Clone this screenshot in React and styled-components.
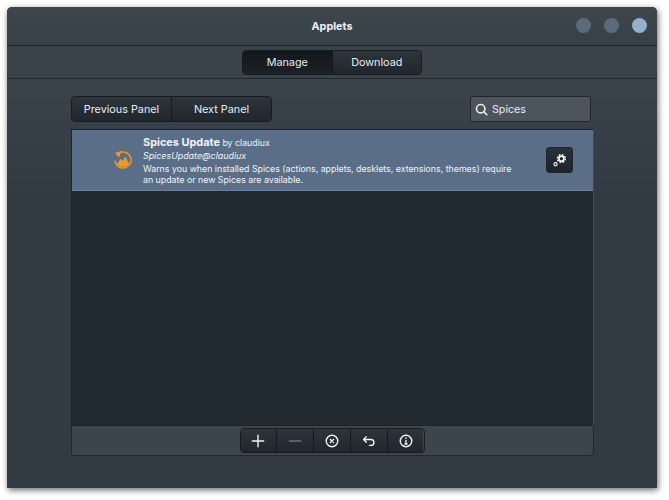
import React from 'react';
import styled, { createGlobalStyle } from 'styled-components';

const GlobalStyle = createGlobalStyle`
  html, body {
    margin: 0;
    background: #fff;
  }

  body {
    font-family: 'Inter', 'Liberation Sans', sans-serif;
    -webkit-font-smoothing: antialiased;
  }
`;

const Page = styled.div`
  box-sizing: border-box;
  height: 500px;
  overflow: hidden;
  padding: 7px 12px 11px 7px;
  width: 669px;
`;

const Window = styled.div`
  background: #323b43;
  border-radius: 5px 5px 0 0;
  box-shadow: 1px 2px 6px rgba(0, 0, 0, 0.6);
  display: flex;
  flex-direction: column;
  height: 481px;
  overflow: hidden;
  width: 650px;
`;

const TitleBar = styled.header`
  align-items: center;
  background: linear-gradient(#3e464e, #373f47);
  border-bottom: 1px solid #20272d;
  box-sizing: border-box;
  display: flex;
  flex: none;
  height: 39px;
  justify-content: center;
  padding-top: 1px;
  position: relative;
`;

const Title = styled.h1`
  color: #eef1f3;
  font-size: 10.8px;
  font-weight: 700;
  margin: 0;
`;

const WindowControls = styled.div`
  display: flex;
  gap: 13px;
  position: absolute;
  right: 10px;
  top: 11px;
`;

const WindowDot = styled.span`
  background: ${(p) => (p.$active ? '#93b1cd' : '#5b6b7e')};
  border-radius: 50%;
  height: 15px;
  width: 15px;
`;

const TabBar = styled.nav`
  background: #3a424a;
  border-bottom: 1px solid #20272d;
  box-sizing: border-box;
  display: flex;
  flex: none;
  height: 33px;
  justify-content: center;
  padding-top: 4px;
`;

const Group = styled.div`
  border: 1px solid #171c21;
  border-radius: 4px;
  box-sizing: border-box;
  display: flex;
  overflow: hidden;
`;

const TabGroup = styled(Group)`
  height: 25px;
  width: 180px;
`;

const Segment = styled.button`
  align-items: center;
  background: ${(p) =>
    p.$active
      ? 'linear-gradient(#12171b, #1b2126)'
      : 'linear-gradient(#2d353c, #1f262c)'};
  border: 0;
  border-left: 1px solid #14191d;
  color: #e8ebee;
  display: flex;
  flex: 1;
  font-family: inherit;
  font-size: 10.8px;
  justify-content: center;
  padding: 0;

  &:first-child {
    border-left: 0;
  }
`;

const Content = styled.main`
  background: linear-gradient(#3a424a, #323b43 120px);
  display: flex;
  flex: 1;
  flex-direction: column;
  padding: 17px 63px 0 64px;
`;

const ControlRow = styled.div`
  display: flex;
  justify-content: space-between;
  padding-right: 3px;
`;

const PanelGroup = styled(Group)`
  height: 26px;
  width: 201px;
`;

const Search = styled.label`
  align-items: center;
  background: #4c555d;
  border: 1px solid #20262c;
  border-radius: 3px;
  box-sizing: border-box;
  color: #e8ebee;
  display: flex;
  font-size: 10.7px;
  gap: 4px;
  height: 26px;
  padding-left: 4px;
  width: 121px;
`;

const AppletList = styled.section`
  background: #212a31;
  border: 1px solid #1c2329;
  border-right-color: #3f4a54;
  box-sizing: border-box;
  height: 297px;
  margin-top: 7px;
`;

const AppletRow = styled.article`
  align-items: center;
  background: #5a6f87;
  border-bottom: 1px solid #6a7f98;
  box-sizing: border-box;
  color: #f0f3f6;
  display: flex;
  height: 61px;
  padding: 0 20px 0 41px;
`;

const AppletIcon = styled.svg`
  flex: none;
  height: 20px;
  width: 20px;
`;

const AppletText = styled.div`
  flex: 1;
  font-size: 8.8px;
  line-height: 11px;
  margin-left: 10px;
`;

const AppletName = styled.div`
  line-height: 13px;

  strong {
    font-size: 10.9px;
    font-weight: 700;
  }
`;

const AppletUuid = styled.div`
  font-size: 8.9px;
  font-style: italic;
  line-height: 14px;
`;

const ConfigureButton = styled.button`
  align-items: center;
  background: linear-gradient(#2b3137, #1d2227);
  border: 1px solid #20262c;
  border-radius: 3px;
  display: flex;
  height: 26px;
  justify-content: center;
  padding: 0;
  width: 27px;
`;

const Toolbar = styled.footer`
  background: #3c444c;
  border: 1px solid #20272d;
  border-radius: 0 0 4px 4px;
  border-top: 0;
  box-sizing: border-box;
  display: flex;
  height: 30px;
  justify-content: center;
  padding-top: 2px;
`;

const ToolGroup = styled(Group)`
  height: 25px;
  margin-right: 1px;
  width: 185px;
`;

const ToolButton = styled(Segment)`
  color: ${(p) => (p.$muted ? '#69727a' : '#f2f4f6')};
`;

const GlyphIcon = ({ children, size = 14, weight = 1.6 }) => (
  <svg
    width={size}
    height={size}
    viewBox="0 0 16 16"
    fill="none"
    stroke="currentColor"
    strokeWidth={weight}
    strokeLinecap="round"
    strokeLinejoin="round"
  >
    {children}
  </svg>
);

const tools = [
  { name: 'add', icon: <path d="M8 1.5v13M1.5 8h13" /> },
  { name: 'remove', muted: true, icon: <path d="M1.5 8h13" /> },
  {
    name: 'uninstall',
    icon: (
      <>
        <circle cx="8" cy="8" r="6.6" />
        <path d="M6.2 6.2l3.6 3.6M9.8 6.2l-3.6 3.6" />
      </>
    ),
  },
  {
    name: 'undo',
    icon: <path d="M5 3L1.8 6.2 5 9.4M2 6.2h8.2a3.4 3.4 0 0 1 0 6.8H8.5" />,
  },
  {
    name: 'about',
    icon: (
      <>
        <circle cx="8" cy="8" r="6.6" />
        <path d="M8 7.4v4M6.8 11.4h2.4M8 4.4v.4" />
      </>
    ),
  },
];

const App = () => (
  <>
    <GlobalStyle />
    <Page>
      <Window>
        <TitleBar>
          <Title>Applets</Title>
          <WindowControls>
            <WindowDot />
            <WindowDot />
            <WindowDot $active />
          </WindowControls>
        </TitleBar>
        <TabBar>
          <TabGroup>
            <Segment $active>Manage</Segment>
            <Segment>Download</Segment>
          </TabGroup>
        </TabBar>
        <Content>
          <ControlRow>
            <PanelGroup>
              <Segment>Previous Panel</Segment>
              <Segment>Next Panel</Segment>
            </PanelGroup>
            <Search>
              <GlyphIcon size={13} weight={2}>
                <circle cx="7" cy="7" r="5.2" />
                <path d="M11 11l3.5 3.5" />
              </GlyphIcon>
              Spices
            </Search>
          </ControlRow>
          <AppletList>
            <AppletRow>
              <AppletIcon viewBox="0 0 20 20">
                <path
                  d="M7.4 1.6A8.8 8.8 0 1 1 1.2 10.4h1.5A7.3 7.3 0 1 0 7.8 3z"
                  fill="#ef9a22"
                />
                <path d="M2.2 3L8.6 0.8 6 7.6z" fill="#ef9a22" />
                <path
                  d="M4 13.4L7.8 9l2 2 2.4-4.4 3.8 6.8A7 7 0 0 1 4 13.4z"
                  fill="#ef9a22"
                />
              </AppletIcon>
              <AppletText>
                <AppletName>
                  <strong>Spices Update</strong> by claudiux
                </AppletName>
                <AppletUuid>SpicesUpdate@claudiux</AppletUuid>
                Warns you when installed Spices (actions, applets, desklets, extensions, themes) require
                <br />
                an update or new Spices are available.
              </AppletText>
              <ConfigureButton aria-label="Configure">
                <svg width="15" height="15" viewBox="0 0 16 16">
                  <circle
                    cx="10"
                    cy="6"
                    r="4.2"
                    fill="none"
                    stroke="#f2f4f6"
                    strokeWidth="1.6"
                    strokeDasharray="1.8 1.5"
                  />
                  <circle cx="10" cy="6" r="2.7" fill="none" stroke="#f2f4f6" strokeWidth="1.8" />
                  <circle cx="3.8" cy="12" r="1.7" fill="none" stroke="#f2f4f6" strokeWidth="1.2" />
                </svg>
              </ConfigureButton>
            </AppletRow>
          </AppletList>
          <Toolbar>
            <ToolGroup>
              {tools.map((tool) => (
                <ToolButton key={tool.name} $muted={tool.muted} aria-label={tool.name}>
                  <GlyphIcon>{tool.icon}</GlyphIcon>
                </ToolButton>
              ))}
            </ToolGroup>
          </Toolbar>
        </Content>
      </Window>
    </Page>
  </>
);

export default App;
